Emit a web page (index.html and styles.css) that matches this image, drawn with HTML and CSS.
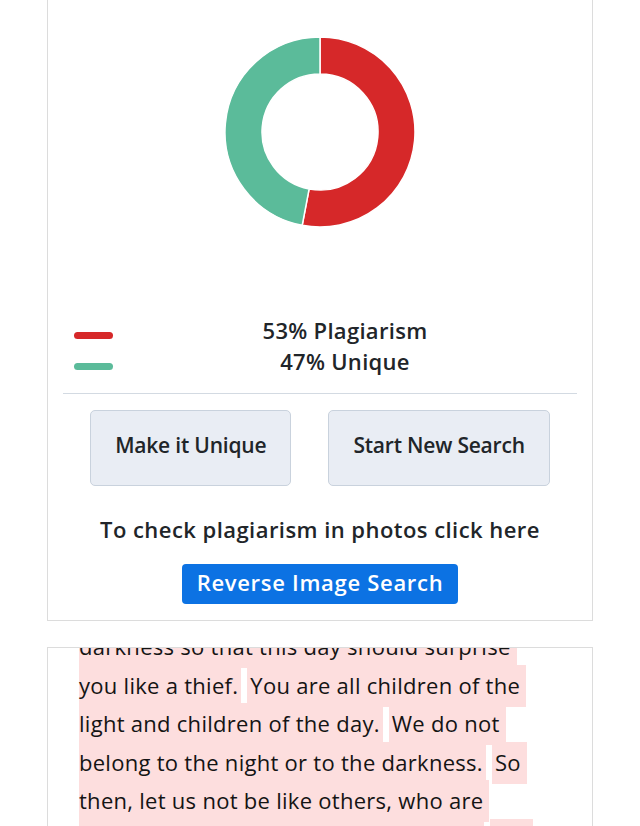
FILE: index.html
```html
<!DOCTYPE html>
<html lang="en">
<head>
<meta charset="utf-8">
<title>Plagiarism Result</title>
<link rel="stylesheet" href="styles.css">
</head>
<body>
<main class="page">
  <section class="card result">
    <div class="chart">
      <svg class="donut" width="190" height="190" viewBox="5 5 190 190" aria-label="53% plagiarism, 47% unique">
        <path class="seg-red" d="M100 5 A95 95 0 1 1 82.20 193.32 L89.13 156.97 A58 58 0 1 0 100 42 Z"/>
        <path class="seg-green" d="M82.20 193.32 A95 95 0 0 1 100 5 L100 42 A58 58 0 0 0 89.13 156.97 Z"/>
      </svg>
    </div>
    <div class="legend">
      <div class="swatches">
        <span class="swatch swatch-red"></span>
        <span class="swatch swatch-green"></span>
      </div>
      <div class="legend-text">
        <p>53% Plagiarism</p>
        <p>47% Unique</p>
      </div>
    </div>
    <hr class="divider">
    <div class="actions">
      <button class="action-btn" type="button">Make it Unique</button>
      <button class="action-btn" type="button">Start New Search</button>
    </div>
    <p class="photo-hint">To check plagiarism in photos click here</p>
    <div class="reverse-wrap">
      <a class="reverse-btn" href="#">Reverse Image Search</a>
    </div>
  </section>

  <section class="card text-card">
    <p class="checked-text"><span class="hl">darkness so that this day should surprise&nbsp;<br>you like a thief.</span> <span class="hl">You are all children of the&nbsp;<br>light and children of the day.</span> <span class="hl">We do not&nbsp;<br>belong to the night or to the darkness.</span> <span class="hl">So&nbsp;<br>then, let us not be like others, who are&nbsp;<br>asleep, but let us be awake and sober.</span> <span class="hl">For&nbsp;<br>those who sleep, sleep at night.</span></p>
  </section>
</main>
</body>
</html>
```

FILE: styles.css
```css
* {
  box-sizing: border-box;
}

body {
  margin: 0;
  background: #ffffff;
  font-family: "Open Sans", "DejaVu Sans", sans-serif;
  color: #212529;
}

.page {
  padding: 0 47px;
}

.card {
  border: 1px solid #dcdcdc;
  background: #ffffff;
}

.result {
  margin-top: -1px;
  padding: 0 15px 16px;
}

.chart {
  display: flex;
  justify-content: center;
  padding: 37px 0 88px;
}

.donut {
  display: block;
}

.seg-red {
  fill: #d62829;
  stroke: #ffffff;
  stroke-width: 1.5;
}

.seg-green {
  fill: #5bbb9a;
  stroke: #ffffff;
  stroke-width: 1.5;
}

.legend {
  display: flex;
}

.swatches {
  width: 50px;
  padding: 17px 0 0 11px;
  display: flex;
  flex-direction: column;
  gap: 24px;
}

.swatch {
  display: block;
  width: 39px;
  height: 7px;
  border-radius: 4px;
}

.swatch-red {
  background: #d62829;
}

.swatch-green {
  background: #5bbb9a;
}

.legend-text {
  flex: 1;
  text-align: center;
  font-size: 22px;
  font-weight: 600;
  line-height: 31px;
  letter-spacing: 0.3px;
}

.legend-text p {
  margin: 0;
}

.divider {
  margin: 16px 0 0;
  border: 0;
  border-top: 1px solid #d3dae2;
}

.actions {
  display: flex;
  justify-content: center;
  gap: 37px;
  margin-top: 16px;
}

.action-btn {
  font-family: inherit;
  font-size: 21px;
  font-weight: 600;
  line-height: 30px;
  letter-spacing: -0.2px;
  color: #212529;
  background: #e9edf4;
  border: 1px solid #c9d2dd;
  border-radius: 5px;
  padding: 19px 24px 25px;
}

.photo-hint {
  margin: 28px 0 0;
  text-align: center;
  font-size: 22px;
  font-weight: 600;
  line-height: 30px;
  letter-spacing: 0.45px;
}

.reverse-wrap {
  display: flex;
  justify-content: center;
  margin-top: 20px;
}

.reverse-btn {
  display: flex;
  align-items: center;
  height: 40px;
  padding: 0 15px 5px;
  background: #0c72e3;
  color: #ffffff;
  border-radius: 4px;
  font-size: 22px;
  font-weight: 600;
  line-height: 30px;
  letter-spacing: 0.7px;
  text-decoration: none;
}

.text-card {
  margin-top: 26px;
  height: 220px;
  overflow: hidden;
  padding: 0 31px;
}

.checked-text {
  margin: -21px 0 0;
  font-size: 22px;
  line-height: 38.5px;
  letter-spacing: 0.28px;
  color: #141414;
}

.hl {
  background: #fddede;
  padding: 5px 3px 7px;
}

.hl:first-child {
  padding-left: 0;
}
```
